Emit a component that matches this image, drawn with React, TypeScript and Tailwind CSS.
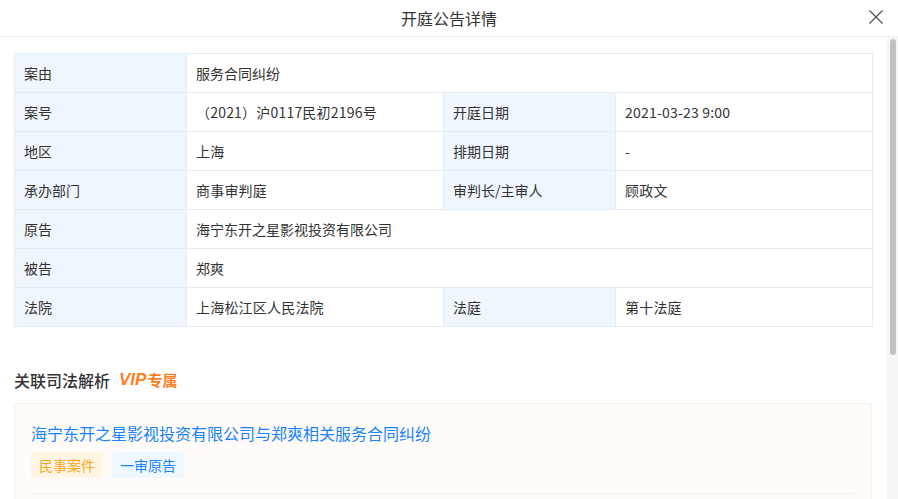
import React from "react";

const font = '"Noto Sans CJK SC", "Noto Sans", sans-serif';

type Cell = { label: string; value: string };
const rows: Cell[][] = [
  [{ label: "案由", value: "服务合同纠纷" }],
  [
    { label: "案号", value: "（2021）沪0117民初2196号" },
    { label: "开庭日期", value: "2021-03-23 9:00" },
  ],
  [
    { label: "地区", value: "上海" },
    { label: "排期日期", value: "-" },
  ],
  [
    { label: "承办部门", value: "商事审判庭" },
    { label: "审判长/主审人", value: "顾政文" },
  ],
  [{ label: "原告", value: "海宁东开之星影视投资有限公司" }],
  [{ label: "被告", value: "郑爽" }],
  [
    { label: "法院", value: "上海松江区人民法院" },
    { label: "法庭", value: "第十法庭" },
  ],
];

export default function App() {
  return (
    <div
      className="w-[898px] h-[499px] bg-white overflow-hidden flex flex-col text-[#333]"
      style={{ fontFamily: font }}
    >
      <div className="h-[37px] shrink-0 border-b border-[#f0f0f0] relative flex items-center justify-center">
        <span className="text-[16px] leading-[24px] text-[#333]">开庭公告详情</span>
        <svg
          className="absolute right-[14px] top-[9px]"
          width="16"
          height="16"
          viewBox="0 0 16 16"
        >
          <path d="M1.5 1.5 L14.5 14.5 M14.5 1.5 L1.5 14.5" stroke="#555" strokeWidth="1.3" fill="none" />
        </svg>
      </div>
      <div className="flex-1 flex min-h-0">
        <div className="flex-1 overflow-hidden pl-[14px] pr-[15px] pt-[16px]">
          <table className="w-[858px] table-fixed border-collapse text-[14px]">
            <colgroup>
              <col className="w-[172px]" />
              <col className="w-[257px]" />
              <col className="w-[172px]" />
              <col className="w-[257px]" />
            </colgroup>
            <tbody>
              {rows.map((r, i) => (
                <tr key={i} className="h-[39px]">
                  {r.length === 1 ? (
                    <>
                      <td className="border border-[#e4edf6] bg-[#eff6fd] pl-[9px] pb-[1px] leading-[20px]">{r[0].label}</td>
                      <td colSpan={3} className="border border-[#e4edf6] pl-[9px] pb-[1px] leading-[20px]">{r[0].value}</td>
                    </>
                  ) : (
                    <>
                      <td className="border border-[#e4edf6] bg-[#eff6fd] pl-[9px] pb-[1px] leading-[20px]">{r[0].label}</td>
                      <td className="border border-[#e4edf6] pl-[9px] pb-[1px] leading-[20px] tracking-[0.2px]">{r[0].value}</td>
                      <td className="border border-[#e4edf6] bg-[#eff6fd] pl-[9px] pb-[1px] leading-[20px]">{r[1].label}</td>
                      <td className="border border-[#e4edf6] pl-[9px] pb-[1px] leading-[20px] tracking-[0.2px]">{r[1].value}</td>
                    </>
                  )}
                </tr>
              ))}
            </tbody>
          </table>

          <div className="mt-[41px] flex items-center h-[24px]">
            <span className="text-[16px] leading-[24px] font-medium text-[#333]">关联司法解析</span>
            <span className="ml-[9px] flex items-center text-[#ff7d1f]">
              <span
                className="italic font-black text-[17px] leading-[24px]"
                style={{ fontFamily: '"Liberation Sans", Arial, sans-serif' }}
              >
                VIP
              </span>
              <span className="font-bold text-[15px] leading-[24px] ml-[1px]">专属</span>
            </span>
          </div>

          <div className="mt-[11px] border border-[#fcefe6] bg-[#fffbf8] px-[16px] pt-[17px]">
            <div className="text-[16px] leading-[24px] text-[#1784fc]">
              海宁东开之星影视投资有限公司与郑爽相关服务合同纠纷
            </div>
            <div className="mt-[7px] flex gap-[9px]">
              <span className="h-[26px] px-[8px] flex items-center text-[14px] rounded-[2px] bg-[#fff5e3] text-[#f5a623]">
                民事案件
              </span>
              <span className="h-[26px] px-[8px] flex items-center text-[14px] rounded-[2px] bg-[#f0f8ff] text-[#1a85ff]">
                一审原告
              </span>
            </div>
            <div className="mt-[15px] border-t border-[#fcefe6] h-[60px]" />
          </div>
        </div>
        <div className="w-[11px] shrink-0 bg-[#f5f5f5] relative">
          <div className="absolute left-[3px] top-[2px] w-[6px] h-[316px] rounded-[3px] bg-[#c1c1c1]" />
        </div>
      </div>
    </div>
  );
}
